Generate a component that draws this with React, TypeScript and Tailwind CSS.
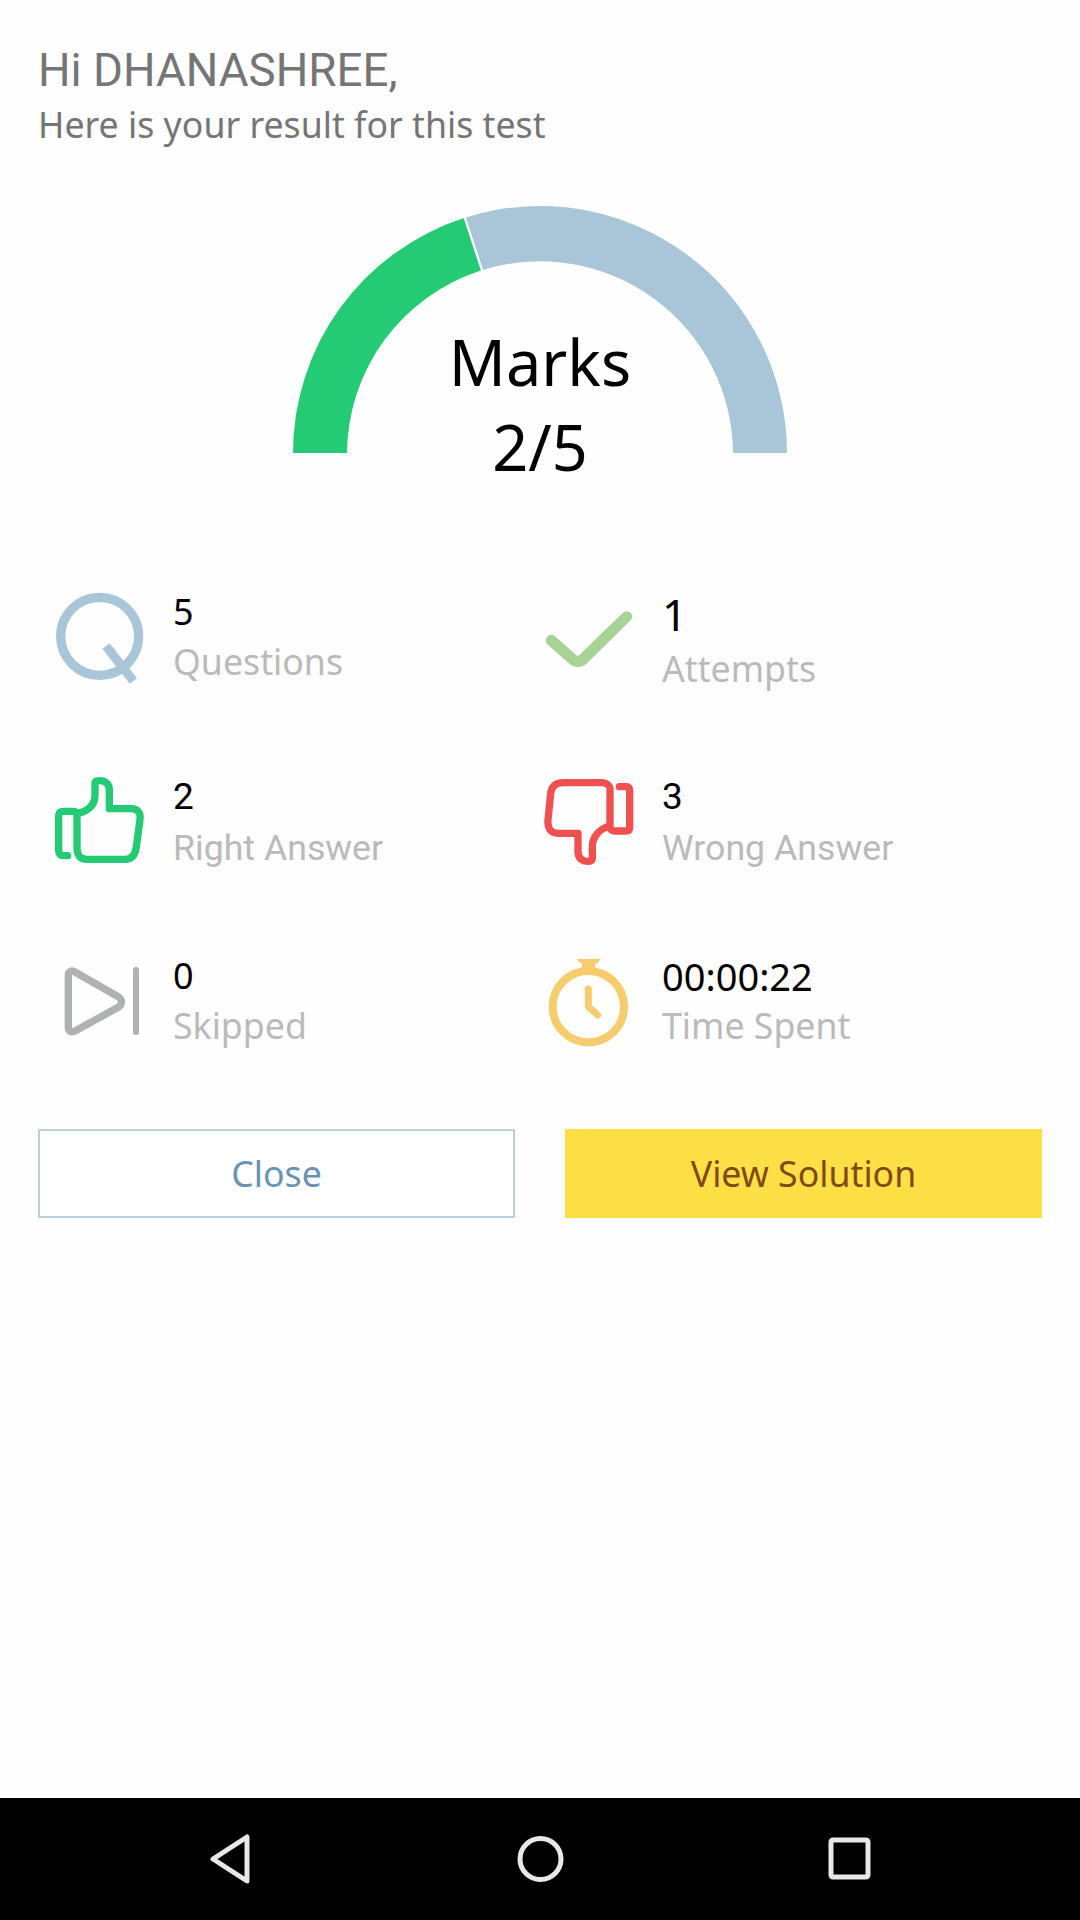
import React from 'react'

type Stat = {
  value: string
  label: string
  viewBox: string
  icon: React.ReactNode
  valueClass: string
  labelClass: string
  textClass: string
}

const noto = 'font-["Noto_Sans",sans-serif]'
const roboto = 'font-["Roboto",sans-serif]'

const stats: Stat[] = [
  {
    value: '5',
    label: 'Questions',
    viewBox: '75 60 300 300',
    textClass: 'pt-[1px]',
    valueClass: 'font-["Noto_Sans",sans-serif] text-[36px] leading-[42px]',
    labelClass: 'font-["Noto_Sans",sans-serif] text-[35.7px] leading-[50px] mt-[3px]',
    icon: (
      <g fill="none" stroke="#a9c6d9" strokeWidth="28">
        <circle cx="209" cy="199" r="117" />
        <path d="M228 228 L310 333" />
      </g>
    ),
  },
  {
    value: '1',
    label: 'Attempts',
    viewBox: '72 60 300 300',
    textClass: 'pt-[0px]',
    valueClass: 'font-["Noto_Sans",sans-serif] text-[44px] leading-[48px]',
    labelClass: 'font-["Noto_Sans",sans-serif] text-[35.7px] leading-[50px] mt-[5px]',
    icon: (
      <path
        d="M94 211 L155 265 C165 277 180 277 190 267 L320 140"
        fill="none"
        stroke="#a9d396"
        strokeWidth="33"
        strokeLinecap="round"
        strokeLinejoin="round"
      />
    ),
  },
  {
    value: '2',
    label: 'Right Answer',
    viewBox: '75 600 300 300',
    textClass: 'pt-[6px]',
    valueClass: 'font-["Roboto",sans-serif] text-[37px] leading-[42px]',
    labelClass: 'font-["Roboto",sans-serif] text-[35.7px] leading-[50px] mt-[5px]',
    icon: (
      <g fill="none" stroke="#24cb74" strokeWidth="22" strokeLinecap="round" strokeLinejoin="round">
        <path d="M145 730 C175 722 195 705 195 675 L195 640 C195 632 200 632 208 632 C228 632 238 642 238 660 L238 716 L305 716 C323 716 333 730 330 748 L319 830 C316 855 305 868 285 868 L170 868 C150 868 141 855 141 835 L141 730" />
        <path d="M113 857 L100 857 C91 857 86 852 86 842 L86 738 C86 728 91 724 100 724 L130 724 C136 724 141 727 141 733" />
      </g>
    ),
  },
  {
    value: '3',
    label: 'Wrong Answer',
    viewBox: '72 600 300 300',
    textClass: 'pt-[6px]',
    valueClass: 'font-["Roboto",sans-serif] text-[37px] leading-[42px]',
    labelClass: 'font-["Roboto",sans-serif] text-[35.7px] leading-[50px] mt-[5px]',
    icon: (
      <g fill="none" stroke="#ef5050" strokeWidth="22" strokeLinecap="round" strokeLinejoin="round">
        <path d="M270 655 C268 645 258 638 245 638 L130 638 C105 638 95 650 92 670 L84 750 C82 773 90 790 115 790 L174 790 L174 845 C174 863 185 874 205 874 C214 874 217 873 217 865 L217 830 C217 800 240 775 270 768 Z" />
        <path d="M298 650 L320 650 C326 650 329 654 329 660 L329 772 C329 780 326 783 320 783 L285 783 C278 783 272 780 270 772" />
      </g>
    ),
  },
  {
    value: '0',
    label: 'Skipped',
    viewBox: '75 60 300 300',
    textClass: 'pt-[5px]',
    valueClass: 'font-["Noto_Sans",sans-serif] text-[36px] leading-[42px]',
    labelClass: 'font-["Noto_Sans",sans-serif] text-[35.7px] leading-[50px] mt-[3px]',
    icon: (
      <g fill="none" stroke="#b0b2b1" strokeLinecap="round" strokeLinejoin="round">
        <path
          strokeWidth="22"
          d="M115 135 C115 124 125 120 135 126 L266 201 C277 208 277 224 266 231 L135 303 C125 308 115 304 115 293 Z"
        />
        <path strokeWidth="18" d="M318 120 L318 306" />
      </g>
    ),
  },
  {
    value: '00:00:22',
    label: 'Time Spent',
    viewBox: '72 60 300 300',
    textClass: 'pt-[5px]',
    valueClass: 'font-["Noto_Sans",sans-serif] text-[38px] leading-[42px]',
    labelClass: 'font-["Noto_Sans",sans-serif] text-[35.7px] leading-[50px] mt-[3px]',
    icon: (
      <g>
        <circle cx="205" cy="230" r="107" fill="none" stroke="#f6cd6d" strokeWidth="24" />
        <path d="M170 87 L242 87 L232 100 L226 100 L226 118 L186 118 L186 100 L180 100 Z" fill="#f6cd6d" />
        <path
          d="M205 177 L205 230 L233 255"
          fill="none"
          stroke="#f6cd6d"
          strokeWidth="21"
          strokeLinecap="round"
          strokeLinejoin="round"
        />
      </g>
    ),
  },
]

function Gauge() {
  return (
    <div className="relative mx-auto mt-[56px] h-[247px] w-[494px]">
      <svg width="494" height="247" viewBox="0 0 494 247" className="block">
        <path d="M0 247 A247 247 0 0 1 170.7 12.1 L187.9 64.6 A193 193 0 0 0 54 247 Z" fill="#24cb74" />
        <path d="M172.9 11.4 A247 247 0 0 1 494 247 L440 247 A193 193 0 0 0 190.1 63.9 Z" fill="#a9c6d9" />
      </svg>
      <div className={`absolute left-0 right-0 top-[113px] text-center text-[63px] leading-[85px] text-black ${noto}`}>
        <div>Marks</div>
        <div>2/5</div>
      </div>
    </div>
  )
}

function StatCell({ stat }: { stat: Stat }) {
  return (
    <div className="flex h-[100px]">
      <svg width="100" height="100" viewBox={stat.viewBox} className="mr-[18px] shrink-0">
        {stat.icon}
      </svg>
      <div className={stat.textClass}>
        <div className={`text-black ${stat.valueClass}`}>{stat.value}</div>
        <div className={`text-[#bababa] ${stat.labelClass}`}>{stat.label}</div>
      </div>
    </div>
  )
}

export default function App() {
  return (
    <div className="flex h-[1920px] w-[1080px] flex-col bg-[#fefefe]">
      <div className="flex-1">
        <div className="pl-[38px] pt-[44px] text-[#757575]">
          <div className={`text-[45.7px] leading-[54px] ${roboto}`}>Hi DHANASHREE,</div>
          <div className={`text-[35.7px] leading-[52px] ${noto}`}>Here is your result for this test</div>
        </div>

        <Gauge />

        <div className="mt-[137px] grid grid-cols-[489px_1fr] gap-y-[80px] pl-[55px]">
          {stats.map((stat) => (
            <StatCell key={stat.label} stat={stat} />
          ))}
        </div>

        <div className={`mt-[79px] flex gap-[50px] pl-[38px] text-[35.7px] ${noto}`}>
          <button className="h-[89px] w-[477px] border-2 border-[#bccfdf] bg-white text-[#6a93b3]">Close</button>
          <button className="h-[89px] w-[477px] bg-[#ffdf46] text-[#7f4a16]">View Solution</button>
        </div>
      </div>

      <div className="flex h-[122px] items-center justify-center gap-[250px] bg-black">
        <svg width="60" height="60" viewBox="0 0 60 60">
          <path d="M47 8 L47 52 L13 30 Z" fill="none" stroke="#e8e8e8" strokeWidth="5" strokeLinejoin="round" />
        </svg>
        <svg width="60" height="60" viewBox="0 0 60 60">
          <circle cx="30.5" cy="30" r="20.5" fill="none" stroke="#e8e8e8" strokeWidth="5" />
        </svg>
        <svg width="60" height="60" viewBox="0 0 60 60">
          <rect x="11" y="11" width="37" height="37" rx="2" fill="none" stroke="#e8e8e8" strokeWidth="5" />
        </svg>
      </div>
    </div>
  )
}
